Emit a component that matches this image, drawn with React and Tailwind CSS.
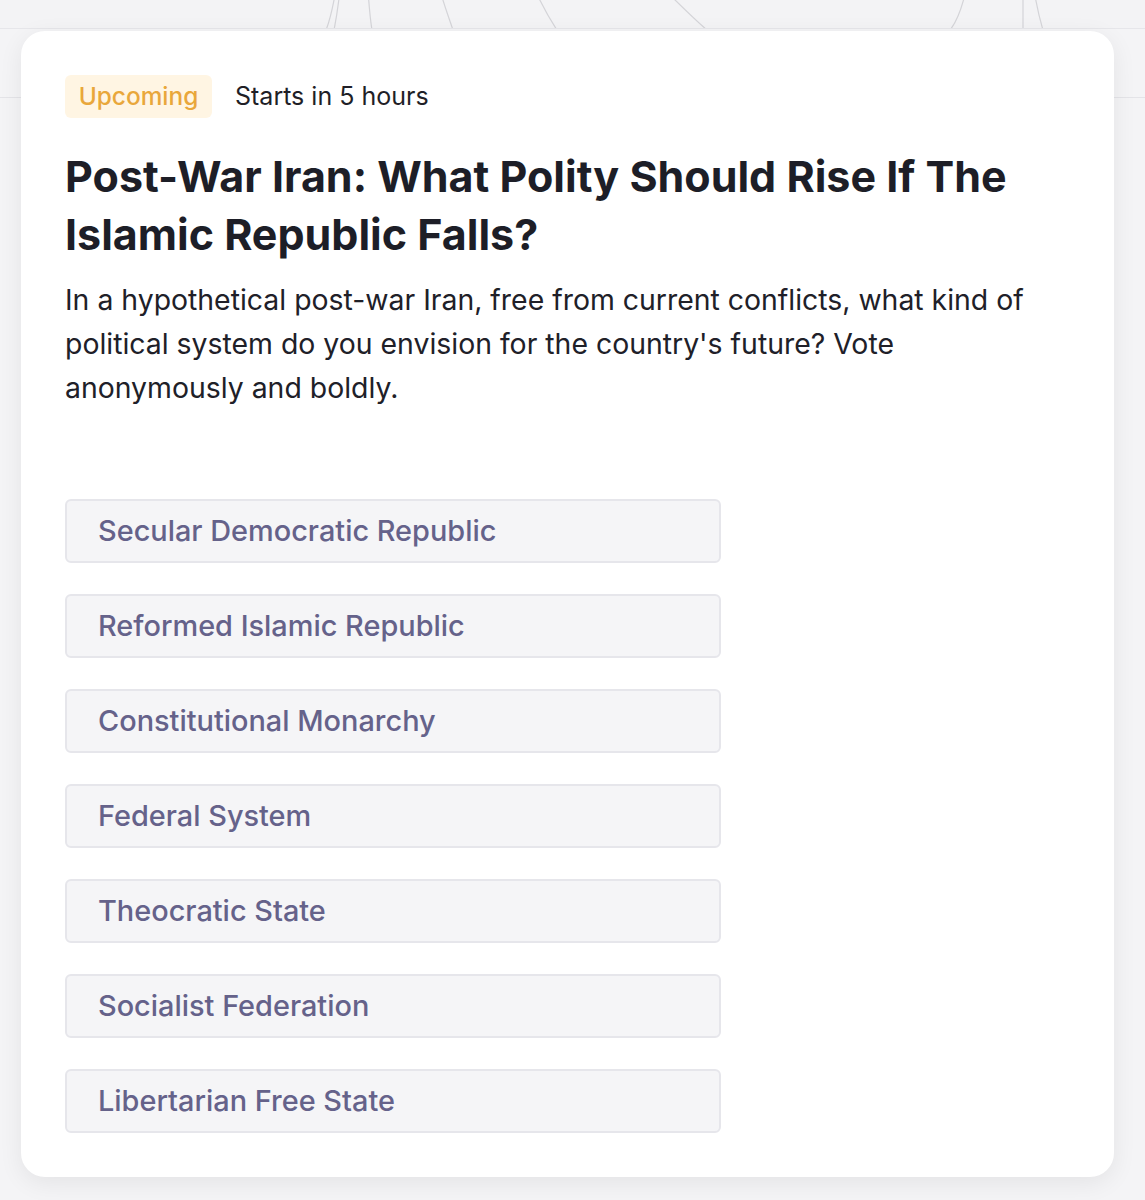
import React from "react";

const options = [
  "Secular Democratic Republic",
  "Reformed Islamic Republic",
  "Constitutional Monarchy",
  "Federal System",
  "Theocratic State",
  "Socialist Federation",
  "Libertarian Free State",
];

function Decor() {
  return (
    <div className="absolute inset-x-0 top-0 h-[29px] overflow-hidden border-b border-[#e6e6ea] bg-[#f3f3f5]">
      <svg width="1145" height="29" viewBox="0 0 1145 29" fill="none" stroke="#d4d4d8" strokeWidth="1.2">
        <path d="M336 -10 C333 5 331 18 326 30" />
        <path d="M340 -10 C338 8 336 20 334 30" />
        <path d="M368 -10 C369 5 370 18 372 30" />
        <path d="M440 -10 C444 5 449 18 453 30" />
        <path d="M535 -10 C542 5 549 18 557 30" />
        <path d="M665 -10 C680 5 693 18 707 30" />
        <path d="M966 -10 C962 8 958 20 950 30" />
        <path d="M1023 -10 C1023 8 1023 20 1023 30" />
        <path d="M1034 -10 C1037 8 1040 20 1043 30" />
      </svg>
    </div>
  );
}

export default function App() {
  return (
    <div
      className="relative min-h-[1200px] w-full overflow-hidden bg-[#f4f4f6] pt-[31px] pb-[24px]"
      style={{ fontFamily: "Inter, 'Noto Sans', sans-serif" }}
    >
      <Decor />
      <div className="absolute inset-x-0 top-[97px] h-px bg-[#e4e4e8]" />
      <div className="relative ml-[21px] w-[1093px] rounded-[24px] bg-white px-[44px] pt-[44px] pb-[44px] shadow-[0_6px_24px_rgba(0,0,0,0.07)]">
        <div className="flex items-center gap-[23px]">
          <span className="flex h-[43px] w-[147px] items-center justify-center rounded-[6px] bg-[#fff5e3] text-[24.4px] font-medium text-[#e9a73b]">
            Upcoming
          </span>
          <span className="text-[25px] text-[#1f1f27]">Starts in 5 hours</span>
        </div>
        <h1 className="mt-[29px] text-[43px] font-bold leading-[58px] text-[#1d1e27]">
          Post-War Iran: What Polity Should Rise If The Islamic Republic Falls?
        </h1>
        <p className="mt-[15px] text-[28.4px] leading-[44px] text-[#202028]">
          In a hypothetical post-war Iran, free from current conflicts, what kind of political system do
          you envision for the country's future? Vote anonymously and boldly.
        </p>
        <div className="mt-[89px] flex flex-col gap-[31px]">
          {options.map((o) => (
            <button
              key={o}
              className="flex h-[64px] w-[656px] items-center rounded-[6px] border-2 border-[#e6e6eb] bg-[#f5f5f7] pl-[31px] text-left text-[28.9px] font-medium text-[#65628a]"
            >
              {o}
            </button>
          ))}
        </div>
      </div>
    </div>
  );
}
